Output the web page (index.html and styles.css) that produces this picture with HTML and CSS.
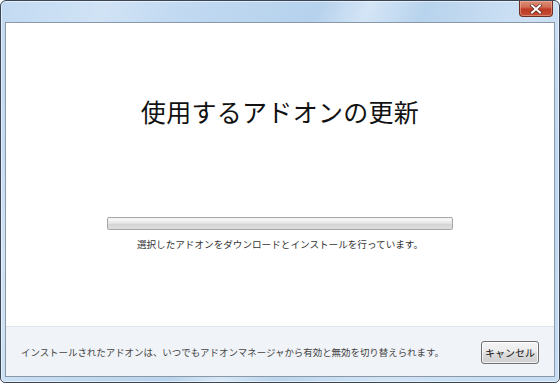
FILE: index.html
```html
<!DOCTYPE html>
<html lang="ja">
<head>
<meta charset="utf-8">
<link rel="stylesheet" href="styles.css">
</head>
<body>
<div class="window">
  <div class="titlebar">
    <div class="close">
      <svg width="14" height="10" viewBox="0 0 14 10"><path d="M3 1.5 L11 8.5 M11 1.5 L3 8.5" stroke="#5a2a22" stroke-width="3.4" stroke-linecap="square"/><path d="M3 1.5 L11 8.5 M11 1.5 L3 8.5" stroke="#fff" stroke-width="2" stroke-linecap="square"/></svg>
    </div>
  </div>
  <div class="content">
    <div class="main">
      <h1 class="title">使用するアドオンの更新</h1>
      <div class="progress"><div class="fill"></div></div>
      <p class="status">選択したアドオンをダウンロードとインストールを行っています。</p>
    </div>
    <div class="footer">
      <span class="note">インストールされたアドオンは、いつでもアドオンマネージャから有効と無効を切り替えられます。</span>
      <button class="btn">キャンセル</button>
    </div>
  </div>
</div>
</body>
</html>
```
FILE: styles.css
```css
html, body { margin: 0; padding: 0; }
body { width: 560px; height: 383px; overflow: hidden; background: #fff; font-family: "Noto Sans CJK JP", "Noto Sans", sans-serif; }
.window {
  box-sizing: border-box;
  width: 560px; height: 383px;
  border: 1px solid #3a4656;
  border-radius: 6px 6px 5px 5px;
  background:
    linear-gradient(112deg, rgba(255,255,255,0) 0%, rgba(255,255,255,0.25) 15%, rgba(255,255,255,0) 25%, rgba(160,195,225,0.35) 45%, rgba(255,255,255,0.3) 52%, rgba(160,195,225,0.3) 60%, rgba(255,255,255,0.2) 75%, rgba(255,255,255,0) 90%),
    linear-gradient(180deg, #c2daf2 0%, #bcd7f1 40%, #c6ddf3 100%);
  box-shadow: inset 0 0 0 1px rgba(255,255,255,0.55);
  display: flex; flex-direction: column;
  padding: 0 4px 5px 4px;
}
.titlebar { height: 21px; flex: none; display: flex; justify-content: flex-end; align-items: flex-start; padding-right: 2px; }
.close {
  width: 34px; height: 16px; box-sizing: border-box;
  border: 1px solid #6b2f25; border-top: none;
  border-radius: 0 0 4px 4px;
  background: linear-gradient(180deg, #dc8e78 0%, #d26e55 40%, #bd3a22 55%, #c44f35 100%);
  box-shadow: inset 0 0 0 1px rgba(255,210,195,0.4);
  display: flex; align-items: center; justify-content: center;
}
.content {
  flex: 1; display: flex; flex-direction: column;
  border: 1px solid #8a98a8;
  background: #fff;
}
.main { flex: 1; display: flex; flex-direction: column; align-items: center; }
.title {
  margin: 70px 0 0 0;
  font-size: 25px; font-weight: normal; color: #111;
  line-height: 36px; letter-spacing: 0.3px;
}
.progress {
  margin-top: 88px;
  width: 346px; height: 13px; box-sizing: border-box;
  border: 1px solid #a8a8a8; border-radius: 2px;
  background: linear-gradient(180deg, #f4f4f4 0%, #e6e6e6 50%, #d6d6d6 51%, #dcdcdc 100%);
  padding: 1px;
}
.fill { height: 100%; border-radius: 1px; background: linear-gradient(180deg, #fafafa, #e2e2e2 50%, #d2d2d2 51%, #dedede); }
.status { margin: 7px 0 0 0; font-size: 9.6px; color: #333; line-height: 14px; }
.footer {
  height: 50px; flex: none; box-sizing: border-box;
  border-top: 1px solid #dde4ec;
  background: #f0f3f7;
  display: flex; align-items: center; justify-content: space-between;
  padding: 0 15px 0 15px;
}
.note { font-size: 9.45px; color: #444; }
.btn {
  width: 58px; height: 23px; box-sizing: border-box;
  border: 1px solid #707070; border-radius: 3px;
  background: linear-gradient(180deg, #f4f4f4 0%, #ebebeb 48%, #dddddd 52%, #cfcfcf 100%);
  box-shadow: inset 0 0 0 1px rgba(255,255,255,0.7);
  font-family: "Noto Sans CJK JP", sans-serif; font-size: 10px; color: #111;
  padding: 0; margin-top: 2px;
}
```
